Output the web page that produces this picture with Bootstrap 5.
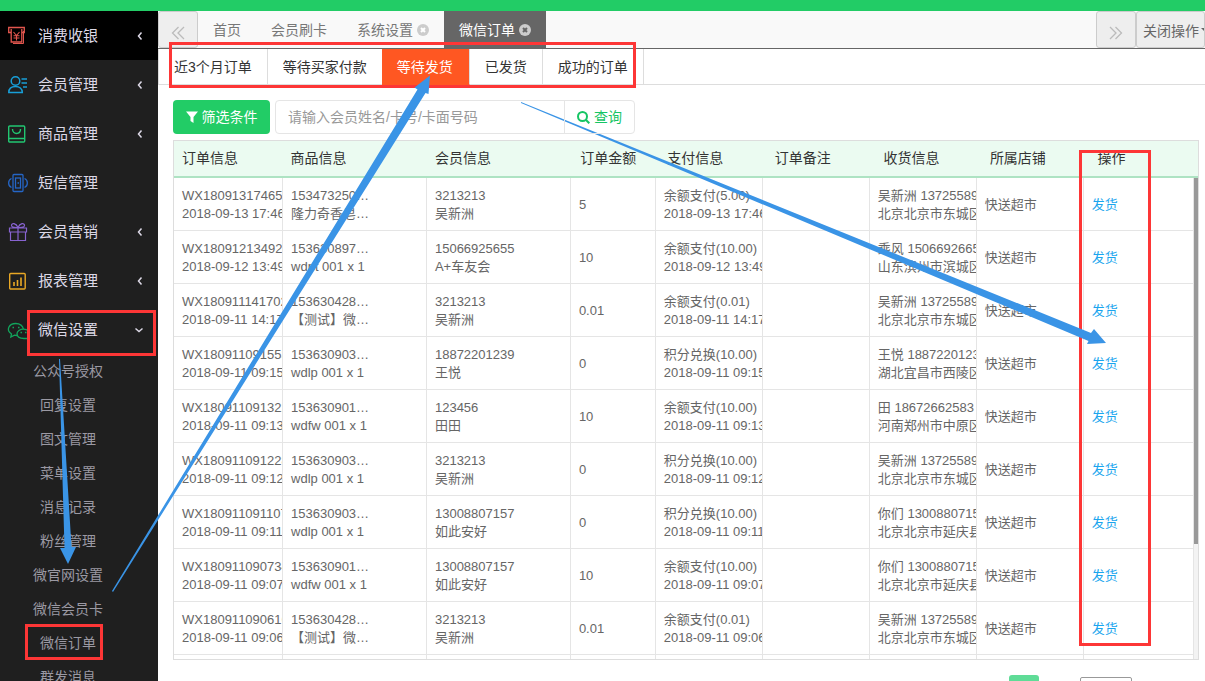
<!DOCTYPE html>
<html lang="zh-CN">
<head>
<meta charset="utf-8">
<meta name="viewport" content="width=device-width, initial-scale=1">
<title>微信订单</title>
<link href="https://cdn.jsdelivr.net/npm/bootstrap@5.3.0/dist/css/bootstrap.min.css" rel="stylesheet">
<style>
  body { font-family: "Liberation Sans", "Noto Sans CJK SC", sans-serif; font-size: 14px; line-height: 20px; color: #333; background: #fff; }
  .topbar { height: 11px; background: #22cc66; }
  .side { width: 158px; background: #1f1f1f; }
  .side a { text-decoration: none; }
  .side-item { height: 49px; padding: 0 14px 0 8px; font-size: 15px; color: #dcd8e6; }
  .side-item.current { background: #000; }
  .side-item .ico { width: 20px; height: 20px; margin-right: 10px; flex: none; overflow: visible; }
  .side-sub a { height: 34px; line-height: 34px; width: 136px; color: #9b99a3; text-align: center; }
  .tabs { height: 38px; background: #f9f9f9; border-bottom: 1px solid #666; }
  .tabs a { padding: 0 15px; gap: 4px; color: #777; text-decoration: none; }
  .tabs a.current { background: #666; color: #fff; }
  .tool { border: 1px solid #ccc; border-radius: 3px; background: #eee; color: #666; padding: 4px 0 0; flex: none; }
  .tool-arrow { width: 40px; color: #bbb; }
  .tool-close { width: 69px; padding: 2px 0 0 6px; white-space: nowrap; overflow: hidden; }
  .tool-close::after { margin-left: 2px; }
  .subtabs { height: 36px; border-bottom: 1px solid #ddd; border-left: 1px solid #ddd; }
  .subtabs a { padding: 0 15px; border-right: 1px solid #ddd; color: #333; text-decoration: none; margin-bottom: -1px; border-bottom: 1px solid #ddd; }
  .subtabs a.current { background: #ff5722; border-bottom-color: #ff5722; color: #fff; margin-left: -1px; padding-right: 16px; }
  .work { padding: 15px 6px 0 15px; }
  .btn-filter { width: 97px; height: 34px; padding: 0; margin-right: 5px; background: #22cc66; color: #fff; border-radius: 4px; font-size: 14px; }
  .search { width: 360px; }
  .search .form-control { height: 34px; font-size: 14px; border-color: #e5e5e5; border-radius: 4px; padding: 0 12px; }
  .search .form-control::placeholder { color: #999; }
  .search .btn { width: 71px; padding: 0; border-color: #e5e5e5; border-radius: 4px; color: #16c564; font-size: 14px; }
  .grid { margin-top: 6px; border: 1px solid #ddd; }
  .grid table { table-layout: fixed; width: 100%; border-collapse: separate; border-spacing: 0; }
  .grid-head { background: #ebfbf1; border-bottom: 2px solid #aee3c3; }
  .grid-head th { height: 35px; padding: 0 8px 2px; font-weight: 400; white-space: nowrap; }
  .grid-body { height: calc(100vh - 200px); min-height: 160px; }
  .grid-body td { height: 53px; padding: 9px 8px 7px; border-right: 1px solid #e5e5e5; border-bottom: 1px solid #e5e5e5; font-size: 13px; line-height: 18px; color: #666; white-space: nowrap; overflow: hidden; vertical-align: middle; }
  .grid-body td a { color: #1aa5ee; text-decoration: none; }
  .track { width: 4px; background: #f3f3f3; flex: none; }
  .thumb { height: 76%; background: #999; }
  .pager { padding: 15px 67px 0 0; gap: 41px; }
  .pager button { width: 30px; height: 30px; border: 0; border-radius: 3px; background: #5fdc97; color: #fff; }
  .pager input { width: 52px; height: 28px; margin-top: 2px; border: 1px solid #999; border-radius: 2px; }
  .notes { inset: 0; pointer-events: none; }
</style>
</head>
<body class="vh-100 overflow-hidden position-relative">
<div class="d-flex flex-column h-100">
  <div class="topbar flex-shrink-0"></div>
  <div class="d-flex flex-grow-1 overflow-hidden">
    <nav class="side flex-shrink-0 overflow-hidden">
      <a href="#" class="side-item current d-flex align-items-center">
        <svg class="ico" viewBox="0 0 20 20" fill="none" stroke="#e2564e" stroke-width="1.3"><path d="M3 6.500H.7V1.500H16.300V6.500H14M3.200 3V16H13.800V3"/><path d="M5 17.500H15.500V5" stroke-width="1"/><path d="M5.500 6 8.500 9.500 11.500 6M5.500 9.700h6M5.500 12h6M8.500 9.500V14.500" stroke-width="1.100"/></svg>
        消费收银
        <svg class="ms-auto" width="8" height="10" viewBox="0 0 8 10" fill="none" stroke="#dcd8e6" stroke-width="1.500"><path d="M5.500 1.500 2.500 5l3 3.500"/></svg></a>
      <a href="#" class="side-item d-flex align-items-center">
        <svg class="ico" viewBox="0 0 20 20" fill="none" stroke="#189fd8" stroke-width="1.500"><circle cx="7.500" cy="6" r="4.300"/><path d="M.8 17.500C.8 13.500 3.500 11.500 7.500 11.500S14.300 13.500 14.300 17.500ZM13.500 4H19M13.500 8H19M15 12H19"/></svg>
        会员管理
        <svg class="ms-auto" width="8" height="10" viewBox="0 0 8 10" fill="none" stroke="#dcd8e6" stroke-width="1.500"><path d="M5.500 1.500 2.500 5l3 3.500"/></svg></a>
      <a href="#" class="side-item d-flex align-items-center">
        <svg class="ico" viewBox="0 0 20 20" fill="none" stroke="#22c671" stroke-width="1.400"><rect x=".7" y="2" width="16" height="16" rx="1"/><path d="M.7 14.500h16M4.500 5C4.500 11 12.500 11 12.500 5"/></svg>
        商品管理
        <svg class="ms-auto" width="8" height="10" viewBox="0 0 8 10" fill="none" stroke="#dcd8e6" stroke-width="1.500"><path d="M5.500 1.500 2.500 5l3 3.500"/></svg></a>
      <a href="#" class="side-item d-flex align-items-center">
        <svg class="ico" viewBox="0 0 20 20" fill="none" stroke="#2566c6" stroke-width="1.300"><rect x="5" y="1.500" width="10" height="17" rx="1"/><rect x="7.500" y="5" width="5" height="10"/><path d="M9.500 10h1.500M3.500 5.500C-.3 7-.3 13 3.500 14.500M16.500 5.500C20.300 7 20.300 13 16.500 14.500"/></svg>
        短信管理</a>
      <a href="#" class="side-item d-flex align-items-center">
        <svg class="ico" viewBox="0 0 20 20" fill="none" stroke="#8763d0" stroke-width="1.200"><path d="M1.500 6H18.500V10H1.500ZM2.500 10V18.500H17.500V10M10 6V18.500M10 5.500C8 1 3.500.5 3.500 3.500c0 1.500 2 2.300 6.500 2M10 5.500C12 1 16.500.5 16.500 3.500c0 1.500-2 2.300-6.500 2"/></svg>
        会员营销
        <svg class="ms-auto" width="8" height="10" viewBox="0 0 8 10" fill="none" stroke="#dcd8e6" stroke-width="1.500"><path d="M5.500 1.500 2.500 5l3 3.500"/></svg></a>
      <a href="#" class="side-item d-flex align-items-center">
        <svg class="ico" viewBox="0 0 20 20" fill="none" stroke="#e9a825" stroke-width="1.400"><rect x="1.700" y="2.500" width="15.500" height="15.500" rx="1"/><path d="M6 11v4M9.500 9v6M13 6.500V15" stroke-width="1.600"/></svg>
        报表管理
        <svg class="ms-auto" width="8" height="10" viewBox="0 0 8 10" fill="none" stroke="#dcd8e6" stroke-width="1.500"><path d="M5.500 1.500 2.500 5l3 3.500"/></svg></a>
      <a href="#" class="side-item d-flex align-items-center">
        <svg class="ico" viewBox="0 0 20 20" fill="none" stroke="#12a45c" stroke-width="1.300"><path d="M9 15.500 6.500 15.200 2.800 17 3.500 14C-2.500 10 1 3.500 7.800 3.500 12 3.500 15 6 15.300 9"/><path d="M20 18.500H16C11.500 18.500 9 16.500 9 13.800S12 9.200 15.500 9.200C18 9.200 19.500 10 20.500 11"/><path d="M4.500 7.500h1.500M10 7.500h1.500M12.500 12.500H14M17 12.500h1.500"/></svg>
        微信设置
        <svg class="ms-auto" width="10" height="8" viewBox="0 0 10 8" fill="none" stroke="#dcd8e6" stroke-width="1.500"><path d="M1.500 2.500 5 5.500l3.500-3"/></svg></a>
      <div class="side-sub d-flex flex-column">
        <a href="#">公众号授权</a><a href="#">回复设置</a><a href="#">图文管理</a><a href="#">菜单设置</a><a href="#">消息记录</a><a href="#">粉丝管理</a><a href="#">微官网设置</a><a href="#">微信会员卡</a><a href="#">微信订单</a><a href="#">群发消息</a>
      </div>
    </nav>

    <main class="flex-grow-1 overflow-hidden">
      <div class="tabs d-flex">
        <button class="tool tool-arrow" aria-label="向左"><svg width="14" height="14" viewBox="0 0 14 14" fill="none" stroke="currentColor" stroke-width="1.300"><path d="M7.500 1 1.500 7l6 6M13 1 7 7l6 6"/></svg></button>
        <a href="#" class="d-flex align-items-center">首页</a>
        <a href="#" class="d-flex align-items-center">会员刷卡</a>
        <a href="#" class="d-flex align-items-center">系统设置
          <svg width="12" height="12" viewBox="0 0 12 12"><circle cx="6" cy="6" r="6" fill="#ccc"/><path d="M4 4l4 4M8 4 4 8" stroke="#fff" stroke-width="2"/></svg></a>
        <a href="#" class="current d-flex align-items-center">微信订单
          <svg width="12" height="12" viewBox="0 0 12 12"><circle cx="6" cy="6" r="6" fill="#ccc"/><path d="M4 4l4 4M8 4 4 8" stroke="#666" stroke-width="2"/></svg></a>
        <button class="tool tool-arrow ms-auto" aria-label="向右"><svg width="14" height="14" viewBox="0 0 14 14" fill="none" stroke="currentColor" stroke-width="1.300"><path d="M1 1l6 6-6 6M6.500 1l6 6-6 6"/></svg></button>
        <button class="tool tool-close dropdown-toggle text-start">关闭操作</button>
      </div>
      <div class="subtabs d-flex">
        <a href="#" class="d-flex align-items-center">近3个月订单</a>
        <a href="#" class="d-flex align-items-center">等待买家付款</a>
        <a href="#" class="current d-flex align-items-center">等待发货</a>
        <a href="#" class="d-flex align-items-center">已发货</a>
        <a href="#" class="d-flex align-items-center">成功的订单</a>
      </div>

      <div class="work">
        <form class="d-flex">
          <button type="button" class="btn btn-filter d-flex align-items-center justify-content-center gap-1">
            <svg width="12" height="12" viewBox="0 0 12 12" fill="#fff"><path d="M0 .5H12L7.500 6V12L4.500 10V6Z"/></svg>筛选条件</button>
          <div class="input-group search flex-nowrap">
            <input type="text" class="form-control" aria-label="会员查询" placeholder="请输入会员姓名/卡号/卡面号码">
            <button type="button" class="btn d-flex align-items-center justify-content-center gap-1">
              <svg width="13" height="13" viewBox="0 0 13 13" fill="none" stroke="currentColor" stroke-width="2"><circle cx="5.500" cy="5.500" r="4.500"/><path d="M8.800 8.800 12.300 12.300"/></svg>查询</button>
          </div>
        </form>

        <div class="grid">
          <div class="grid-head">
            <table>
              <colgroup><col style="width:10.600%"><col style="width:14.100%"><col style="width:14.200%"><col style="width:8.500%"><col style="width:10.500%"><col style="width:10.600%"><col style="width:10.400%"><col style="width:10.500%"><col></colgroup>
              <thead><tr><th>订单信息</th><th>商品信息</th><th>会员信息</th><th>订单金额</th><th>支付信息</th><th>订单备注</th><th>收货信息</th><th>所属店铺</th><th>操作</th></tr></thead>
            </table>
          </div>
          <div class="grid-body d-flex overflow-hidden">
            <div class="flex-grow-1">
              <table>
                <colgroup><col style="width:10.690%"><col style="width:14.110%"><col style="width:14.110%"><col style="width:8.330%"><col style="width:10.490%"><col style="width:10.490%"><col style="width:10.490%"><col style="width:10.490%"><col></colgroup>
                <tbody id="orders"></tbody>
              </table>
            </div>
            <div class="track"><div class="thumb"></div></div>
          </div>
        </div>
        <div class="pager d-flex justify-content-end">
          <button type="button" aria-label="当前页"></button>
          <input type="text" aria-label="页码">
        </div>
      </div>
    </main>
  </div>
</div>

<svg class="notes position-absolute w-100 h-100" aria-hidden="true">
  <g fill="none" stroke="#fd3636" stroke-width="3">
    <rect x="170.500" y="43.500" width="464" height="43"/>
    <rect x="28.500" y="311.500" width="126" height="43"/>
    <rect x="26.500" y="625.500" width="75" height="33"/>
    <rect x="1080.500" y="151.500" width="69" height="493"/>
  </g>
  <g fill="#3a94e6">
    <path d="M59 359 60 359 71.500 547 76 547 68 564 60 548 64.500 548Z"/>
    <path d="M112 591 417.500 89.500 414.500 87.500 430 75.500 428.500 94 425.500 93 113 592Z"/>
    <path d="M521 102 1091 333 1094 329 1106 343 1087 344 1088.500 341 521 103Z"/>
  </g>
</svg>

<script src="https://cdn.jsdelivr.net/npm/bootstrap@5.3.0/dist/js/bootstrap.bundle.min.js"></script>
<script>
  const orders = [
    ['WX180913174651', '2018-09-13 17:46', '153473250…', '隆力奇香皂…', '3213213', '吴新洲', '5', '余额支付(5.00)', '吴新洲 13725589', '北京北京市东城区'],
    ['WX180912134927', '2018-09-12 13:49', '153630897…', 'wdpt 001 x 1', '15066925655', 'A+车友会', '10', '余额支付(10.00)', '乘风 1506692665', '山东滨州市滨城区'],
    ['WX180911141702', '2018-09-11 14:17', '153630428…', '【测试】微…', '3213213', '吴新洲', '0.01', '余额支付(0.01)', '吴新洲 13725589', '北京北京市东城区'],
    ['WX180911091553', '2018-09-11 09:15', '153630903…', 'wdlp 001 x 1', '18872201239', '王悦', '0', '积分兑换(10.00)', '王悦 1887220123', '湖北宜昌市西陵区'],
    ['WX180911091322', '2018-09-11 09:13', '153630901…', 'wdfw 001 x 1', '123456', '田田', '10', '余额支付(10.00)', '田 18672662583', '河南郑州市中原区'],
    ['WX180911091228', '2018-09-11 09:12', '153630903…', 'wdlp 001 x 1', '3213213', '吴新洲', '0', '积分兑换(10.00)', '吴新洲 13725589', '北京北京市东城区'],
    ['WX180911091107', '2018-09-11 09:11', '153630903…', 'wdlp 001 x 1', '13008807157', '如此安好', '0', '积分兑换(10.00)', '你们 1300880715', '北京北京市延庆县'],
    ['WX180911090734', '2018-09-11 09:07', '153630901…', 'wdfw 001 x 1', '13008807157', '如此安好', '10', '余额支付(10.00)', '你们 1300880715', '北京北京市延庆县'],
    ['WX180911090616', '2018-09-11 09:06', '153630428…', '【测试】微…', '3213213', '吴新洲', '0.01', '余额支付(0.01)', '吴新洲 13725589', '北京北京市东城区']
  ];
  document.getElementById('orders').innerHTML = orders.map(o => `<tr>
    <td>${o[0]}<br>${o[1]}</td><td>${o[2]}<br>${o[3]}</td><td>${o[4]}<br>${o[5]}</td><td>${o[6]}</td>
    <td>${o[7]}<br>${o[1]}</td><td></td><td>${o[8]}<br>${o[9]}</td><td>快送超市</td><td><a href="#">发货</a></td></tr>`).join('') +
    '<tr>' + '<td></td>'.repeat(9) + '</tr>';
</script>
</body>
</html>
